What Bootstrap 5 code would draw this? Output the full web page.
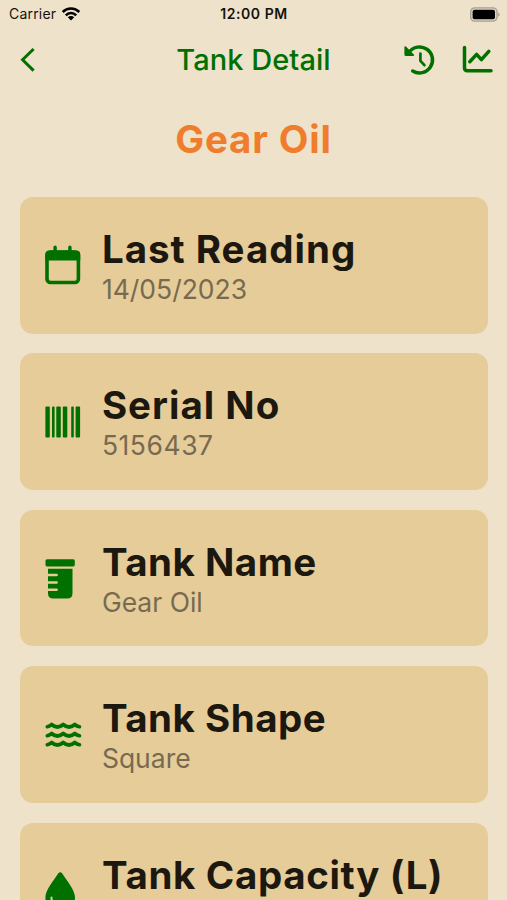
<!DOCTYPE html>
<html lang="en">
<head>
<meta charset="utf-8">
<meta name="viewport" content="width=device-width, initial-scale=1">
<title>Tank Detail</title>
<link href="https://cdn.jsdelivr.net/npm/bootstrap@5.3.0/dist/css/bootstrap.min.css" rel="stylesheet">
<style>
html{overflow:hidden}
body{background:#eee2cb;font-family:Inter,"Liberation Sans",sans-serif;color:#1c180f;height:900px;overflow:hidden}
svg{display:block;flex:none}
.status-row{height:28px;padding:0 7px 0 9px;font-size:14px;line-height:28px;color:#15120e}
.status-row>div,.top-nav>div{flex:1 1 0}
.carrier{letter-spacing:.2px}
.wifi{margin-left:5px}
.clock{font-weight:600;letter-spacing:.55px;padding-right:1px}
.top-nav{height:64px;padding:0 14px;color:#007000}
.back-icon{margin-left:6px}
.nav-title{font-size:29px;line-height:64px;font-weight:500;letter-spacing:.05px;white-space:nowrap}
.tank-title{font-size:38.5px;line-height:95px;height:105px;font-weight:650;letter-spacing:.85px;color:#ef7d2b}
.tank-list{padding:0 19.5px 0 20.4px;gap:19.9px}
.tank-card{height:136.5px;flex:none;border:0;border-radius:13px;background:#e6cc98;padding:29px 0 0 24.200px}
.tank-card:last-child{height:77px;border-radius:13px 13px 0 0}
.tank-icon{width:57.3px;flex:none;color:#007000;padding-top:19px}
.tank-card:last-child .tank-icon{height:48px;overflow:hidden}
.item-title{font-size:38.5px;line-height:46px;font-weight:650;letter-spacing:1px;white-space:nowrap}
.item-title.tight{letter-spacing:.5px}
.item-title.tall{letter-spacing:.65px}
.item-value{font-size:26.5px;line-height:34px;font-weight:370;color:#776a51;white-space:nowrap}
.item-value.wide{letter-spacing:.55px}
</style>
</head>
<body>
<header>
  <div class="status-row d-flex align-items-center">
    <div class="d-flex align-items-center"><span class="carrier">Carrier</span>
      <svg class="wifi" width="20" height="14" viewBox="0 0 20 14" fill="none" stroke="#000" stroke-width="2.5"><path d="M1.7 5a11.7 11.7 0 0 1 16.6 0M4.8 8.3a7.3 7.3 0 0 1 10.4 0"/><path d="M6.8 10.3a4.5 4.5 0 0 1 6.4 0L10 13.5z" fill="#000" stroke="none"/></svg>
    </div>
    <span class="clock">12:00 PM</span>
    <div class="d-flex justify-content-end">
      <svg width="30" height="15" viewBox="0 0 30 15"><rect x=".7" y=".9" width="26.3" height="13.2" rx="4" fill="#e1d6c0" stroke="#a69f90" stroke-width="1.3"/><rect x="2.6" y="2.8" width="22.4" height="9.4" rx="2" fill="#000"/><path d="M28.2 5.2q2.8 2.3 0 4.6z" fill="#a69f90"/></svg>
    </div>
  </div>
  <nav class="top-nav d-flex align-items-center">
    <div><svg class="back-icon" width="16" height="26" viewBox="0 0 16 26" fill="none" stroke="currentColor" stroke-width="3"><path d="M13.6 2 2.6 12.8l11 10.8"/></svg></div>
    <span class="nav-title">Tank Detail</span>
    <div class="d-flex justify-content-end">
      <svg width="32" height="32" viewBox="0 0 32 32" fill="none" stroke="currentColor" stroke-width="3.5" stroke-linecap="round" stroke-linejoin="round"><path d="M5 8.3A13 13 0 1 1 8.7 27"/><path d="M1.3 3.2v7.2q0 .7.7.7h7.2z" fill="currentColor" stroke-width="1.8"/><path d="M16.4 9.7v7.1l4 4.4" stroke-width="2.7"/></svg>
      <svg class="ms-4" width="33" height="30" viewBox="0 0 33 30" fill="none" stroke="currentColor" stroke-width="3.5" stroke-linecap="round" stroke-linejoin="round"><path d="M4.500 3.600v20.200q0 3 3 3H31M9.800 17.700l6.800-7.300 4.800 5.200 7.400-8.200"/></svg>
    </div>
  </nav>
</header>
<main>
  <h1 class="tank-title text-center m-0">Gear Oil</h1>
  <div class="tank-list d-flex flex-column">
    <section class="card tank-card flex-row">
      <div class="tank-icon"><svg width="36" height="42" viewBox="0 0 36 42"><rect x="2" y="7" width="31.4" height="30.500" rx="3.5" fill="none" stroke="currentColor" stroke-width="3.6"/><path d="M.3 15.5V9.500q0-4 4-4h27q4 0 4 4v6z" fill="currentColor"/><path d="M10.1 2.300V7M24.9 2.300V7" stroke="currentColor" stroke-width="3.4" stroke-linecap="round"/></svg></div>
      <div><div class="item-title">Last Reading</div><div class="item-value">14/05/2023</div></div>
    </section>
    <section class="card tank-card flex-row">
      <div class="tank-icon"><svg width="36" height="42" viewBox="0 0 36 42" fill="currentColor"><rect x=".4" y="5.500" width="4.4" height="31" rx="1"/><rect x="7" y="5.500" width="2.6" height="31" rx="1"/><rect x="11.3" y="5.500" width="4.5" height="31" rx="1"/><rect x="17.8" y="5.500" width="4.5" height="31" rx="1"/><rect x="26.2" y="5.500" width="2.6" height="31" rx="1"/><rect x="30.6" y="5.500" width="4.5" height="31" rx="1"/></svg></div>
      <div><div class="item-title">Serial No</div><div class="item-value wide">5156437</div></div>
    </section>
    <section class="card tank-card flex-row">
      <div class="tank-icon"><svg width="36" height="42" viewBox="0 0 36 42" fill="currentColor"><rect x=".5" y="1.2" width="29.3" height="7.2" rx="1.6"/><path d="M3 10.7h24.5v24.5q0 5.3-5.3 5.3H8.3Q3 40.500 3 35.200V33h8.500q1.400 0 1.400-1.250t-1.400-1.250H3V25.700h8.500q1.400 0 1.400-1.250t-1.400-1.250H3V18.300h8.500q1.400 0 1.400-1.250t-1.400-1.250H3z"/></svg></div>
      <div><div class="item-title tight">Tank Name</div><div class="item-value">Gear Oil</div></div>
    </section>
    <section class="card tank-card flex-row">
      <div class="tank-icon"><svg width="38" height="42" viewBox="0 0 38 42" fill="none" stroke="currentColor" stroke-width="3.7" stroke-linecap="round" stroke-linejoin="round"><path id="wave" d="M2.300 12.700Q4.800 12.200 6.600 10.500Q12.400 15.500 18.200 10.500Q24 15.500 29.800 10.500Q31.800 12.200 34.500 12.700"/><use href="#wave" y="9"/><use href="#wave" y="18"/></svg></div>
      <div><div class="item-title tight">Tank Shape</div><div class="item-value">Square</div></div>
    </section>
    <section class="card tank-card flex-row">
      <div class="tank-icon"><svg width="36" height="42" viewBox="0 0 36 42"><path d="M13.300 2.200Q15.200.2 17.100 2.200C21.500 9.500 30 18.500 30 26.500a14.800 14.800 0 0 1-29.600 0C.4 18.500 8.900 9.500 13.300 2.200z" fill="currentColor"/><path d="M6.500 26.500q0 8.500 8 9" fill="none" stroke="#e6cc98" stroke-width="2" stroke-linecap="round"/></svg></div>
      <div><div class="item-title tall">Tank Capacity (L)</div></div>
    </section>
  </div>
</main>
<script src="https://cdn.jsdelivr.net/npm/bootstrap@5.3.0/dist/js/bootstrap.bundle.min.js"></script>
</body>
</html>
